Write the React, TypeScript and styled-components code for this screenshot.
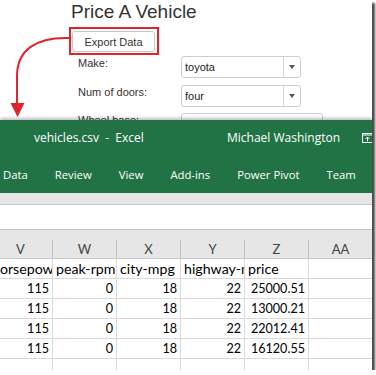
import React from 'react';
import styled, { createGlobalStyle } from 'styled-components';

const GlobalStyle = createGlobalStyle`
  html, body {
    margin: 0;
    padding: 0;
    background: #fff;
  }
  body {
    font-family: "Liberation Sans", Arial, sans-serif;
  }
`;

const Frame = styled.div`
  width: 372px;
  height: 370px;
  overflow: hidden;
  background: #fff;
  box-shadow: 3px 3px 2px rgba(0, 0, 0, 0.7);
  display: flex;
  flex-direction: column;
`;

/* ---------- web form ---------- */

const WebPane = styled.div`
  position: relative;
  flex: 0 0 120px;
  height: 120px;
  overflow: hidden;
  padding-left: 69px;
  box-sizing: border-box;
`;

const Title = styled.h1`
  margin: 1px 0 4px 2px;
  font-size: 19px;
  line-height: 22px;
  font-weight: normal;
  color: #333;
`;

const Callout = styled.div`
  width: fit-content;
  border: 2px solid #e3232c;
  padding: 2px 2px 1px 1px;
`;

const Button = styled.button`
  width: 83px;
  height: 21px;
  padding: 0;
  border: 1px solid #c8c8c8;
  border-radius: 3px;
  background: #fff;
  font-family: "Liberation Sans", Arial, sans-serif;
  font-size: 11px;
  color: #333;
`;

const Fields = styled.div`
  margin: 1px 0 0 9px;
  display: grid;
  grid-template-columns: 103px auto;
  row-gap: 6.5px;
  align-items: start;
`;

const Label = styled.label`
  font-size: 11px;
  line-height: 14px;
  color: #333;
`;

const Select = styled.div<{ $w: number }>`
  width: ${(p) => p.$w}px;
  height: 22px;
  box-sizing: border-box;
  border: 1px solid #cfcfcf;
  border-radius: 3px;
  display: flex;
  align-items: center;
  font-size: 11px;
  color: #222;
  span {
    flex: 1;
    padding-left: 3px;
  }
`;

const Caret = styled.div`
  width: 16px;
  height: 100%;
  border-left: 1px solid #d6d6d6;
  display: flex;
  align-items: center;
  justify-content: center;
  &::after {
    content: '';
    border-left: 3.5px solid transparent;
    border-right: 3.5px solid transparent;
    border-top: 4px solid #555;
  }
`;

const Arrow = styled.svg`
  position: absolute;
  left: 0;
  top: 0;
  pointer-events: none;
`;

/* ---------- excel ---------- */

const Excel = styled.div`
  flex: 1;
  display: flex;
  flex-direction: column;
  position: relative;
  z-index: 1;
  box-shadow: 0 -2px 3px rgba(0, 0, 0, 0.25);
`;

const Ribbon = styled.div`
  background: #217346;
  color: #fff;
  font-family: "Open Sans", "Noto Sans", sans-serif;
  height: 73px;
`;

const TitleBar = styled.div`
  height: 35px;
  display: grid;
  grid-template-columns: 193px 135px auto;
  align-items: center;
  padding-left: 34px;
  font-size: 12px;
  white-space: pre;
`;

const Tabs = styled.div`
  height: 38px;
  display: flex;
  align-items: center;
  gap: 27px;
  padding-left: 3px;
  font-size: 11.3px;
  white-space: nowrap;
`;

const Strip = styled.div`
  height: 11px;
  background: #e6e6e6;
  border-bottom: 1px solid #c6c6c6;
`;

const FormulaBar = styled.div`
  height: 24px;
  background: #fff;
  border-bottom: 1px solid #c6c6c6;
`;

const Sheet = styled.div`
  margin-left: -11px;
  background: #e6e6e6;
  padding-top: 10px;
  display: grid;
  grid-template-columns: repeat(6, 64px);
  font-family: Lato, "Liberation Sans", sans-serif;
`;

const Head = styled.div`
  height: 19px;
  box-sizing: border-box;
  border-right: 1px solid #c3c3c3;
  border-bottom: 1px solid #c9c9c9;
  display: flex;
  align-items: center;
  justify-content: center;
  font-size: 13px;
  color: #444;
`;

const Cell = styled.div<{ $num?: boolean }>`
  height: 20px;
  box-sizing: border-box;
  background: #fff;
  border-right: 1px solid #d9d9d9;
  border-bottom: 1px solid #d9d9d9;
  padding: 0 3px;
  display: flex;
  align-items: center;
  justify-content: ${(p) => (p.$num ? 'flex-end' : 'flex-start')};
  overflow: hidden;
  white-space: nowrap;
  font-size: ${(p) => (p.$num ? '12.6px' : '14.2px')};
  color: #000;
`;

const columns = ['V', 'W', 'X', 'Y', 'Z', 'AA'];
const header = ['horsepower', 'peak-rpm', 'city-mpg', 'highway-mpg', 'price', ''];
const prices = ['25000.51', '13000.21', '22012.41', '16120.55'];

function RibbonIcon() {
  return (
    <svg width="11" height="10" viewBox="0 0 11 10" fill="none" stroke="#fff" strokeWidth="1">
      <rect x="0.5" y="0.5" width="10" height="9" />
      <line x1="0.5" y1="2" x2="10.5" y2="2" />
      <path d="M5.5 8.5V4M3.5 6l2-2 2 2" />
    </svg>
  );
}

export default function App() {
  return (
    <>
      <GlobalStyle />
      <Frame>
        <WebPane>
          <Title>Price A Vehicle</Title>
          <Callout>
            <Button>Export Data</Button>
          </Callout>
          <Fields>
            <Label>Make:</Label>
            <Select $w={120}>
              <span>toyota</span>
              <Caret />
            </Select>
            <Label>Num of doors:</Label>
            <Select $w={120}>
              <span>four</span>
              <Caret />
            </Select>
            <Label>Wheel base:</Label>
            <Select $w={142}>
              <span>88.6</span>
            </Select>
          </Fields>
          <Arrow width="80" height="120" viewBox="0 0 80 120">
            <path d="M69 38 C 36 37, 17 50, 17 76 L 17 105" stroke="#e3232c" strokeWidth="2" fill="none" />
            <polygon points="10.5,103 24.5,103 17.5,117" fill="#e3232c" />
          </Arrow>
        </WebPane>
        <Excel>
          <Ribbon>
            <TitleBar>
              <span>vehicles.csv  -  Excel</span>
              <span>Michael Washington</span>
              <RibbonIcon />
            </TitleBar>
            <Tabs>
              <span>Data</span>
              <span>Review</span>
              <span>View</span>
              <span>Add-ins</span>
              <span>Power Pivot</span>
              <span>Team</span>
            </Tabs>
          </Ribbon>
          <Strip />
          <FormulaBar />
          <Sheet>
            {columns.map((c) => (
              <Head key={c}>{c}</Head>
            ))}
            {header.map((h, i) => (
              <Cell key={'h' + i}>{h}</Cell>
            ))}
            {prices.map((p) => (
              <React.Fragment key={p}>
                <Cell $num>115</Cell>
                <Cell $num>0</Cell>
                <Cell $num>18</Cell>
                <Cell $num>22</Cell>
                <Cell $num>{p}</Cell>
                <Cell />
              </React.Fragment>
            ))}
            {columns.map((c) => (
              <Cell key={'e' + c} />
            ))}
          </Sheet>
        </Excel>
      </Frame>
    </>
  );
}
